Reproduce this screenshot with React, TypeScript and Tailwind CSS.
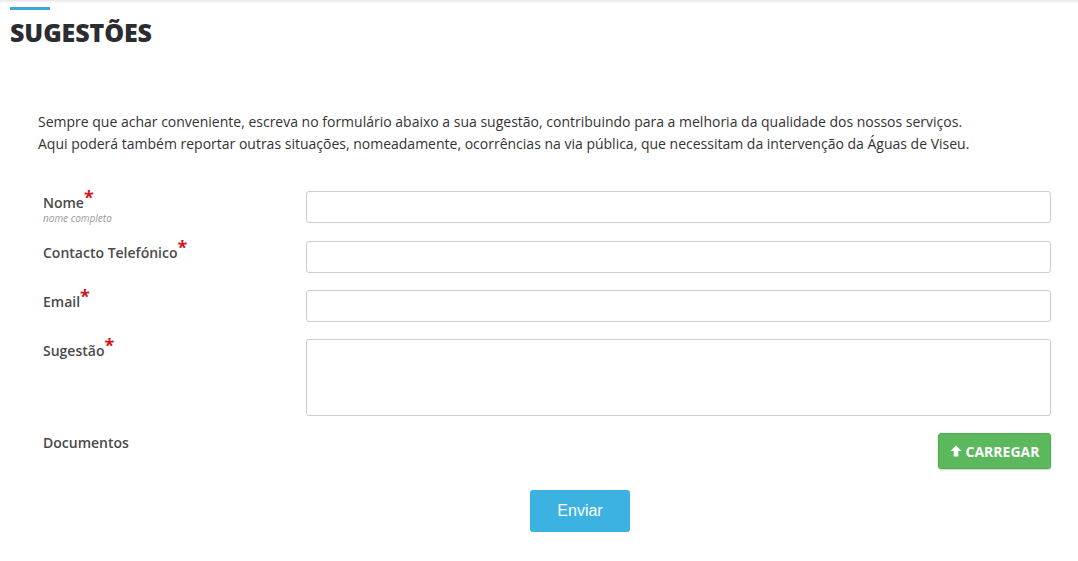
import React from "react";

const fields = [
  { label: "Nome", hint: "nome completo" },
  { label: "Contacto Telefónico" },
  { label: "Email" },
];

function Label({ text, required = true, hint }: { text: string; required?: boolean; hint?: string }) {
  return (
    <div className="w-[263px] shrink-0 pt-[1px]">
      <div className="text-[14px] font-semibold leading-[18px] text-[#4a4a4a]">
        {text}
        {required && <span className="relative -top-[4px] text-[18px] font-bold leading-none text-[#d9131b]">*</span>}
      </div>
      {hint && <div className="text-[10px] italic leading-[12px] text-[#999]">{hint}</div>}
    </div>
  );
}

export default function App() {
  return (
    <div className="min-h-[561px] bg-white font-['Open_Sans',sans-serif] text-[#333]">
      <div className="h-[3px] bg-gradient-to-b from-[#e6e6e6] to-white" />
      <div className="px-[10px]">
        <div className="mt-[4px] h-[3px] w-[40px] bg-[#3aa8d8]" />
        <h1 className="mt-[8px] text-[25px] font-extrabold leading-[28px] tracking-[-0.1px] text-[#2b2d30]">SUGESTÕES</h1>
      </div>

      <p className="mt-[65px] pl-[38px] text-[14px] leading-[22px] text-[#333]">
        Sempre que achar conveniente, escreva no formulário abaixo a sua sugestão, contribuindo para a melhoria da qualidade dos nossos serviços.
        <br />
        Aqui poderá também reportar outras situações, nomeadamente, ocorrências na via pública, que necessitam da intervenção da Águas de Viseu.
      </p>

      <form className="ml-[43px] mt-[36px] w-[1008px]">
        {fields.map((f) => (
          <div key={f.label} className="mb-[17px] flex">
            <Label text={f.label} hint={f.hint} />
            <input className="h-[32px] flex-1 rounded-[3px] border border-[#ccc] bg-white" />
          </div>
        ))}
        <div className="mb-[17px] flex">
          <Label text="Sugestão" />
          <textarea className="h-[77px] flex-1 resize-none rounded-[3px] border border-[#ccc] bg-white" />
        </div>
        <div className="flex items-start justify-between">
          <div className="pt-[1px] text-[14px] font-semibold leading-[18px] text-[#4a4a4a]">Documentos</div>
          <button
            type="button"
            className="flex h-[36px] w-[113px] items-center justify-center gap-[4px] rounded-[3px] border border-[#4cae4c] bg-[#5cb85c] text-[14px] font-bold text-white shadow-[0_1px_2px_rgba(0,0,0,0.2)]"
          >
            <svg width="12" height="12" viewBox="0 0 24 24" fill="white">
              <path d="M12 1 L23 12 H16.5 V23 H7.5 V12 H1 Z" />
            </svg>
            CARREGAR
          </button>
        </div>
        <div className="mt-[21px] flex">
          <button
            type="button"
            className="ml-[487px] h-[42px] w-[100px] rounded-[3px] bg-[#3cb2e2] font-['Liberation_Sans',sans-serif] text-[16px] text-white"
          >
            Enviar
          </button>
        </div>
      </form>
    </div>
  );
}
